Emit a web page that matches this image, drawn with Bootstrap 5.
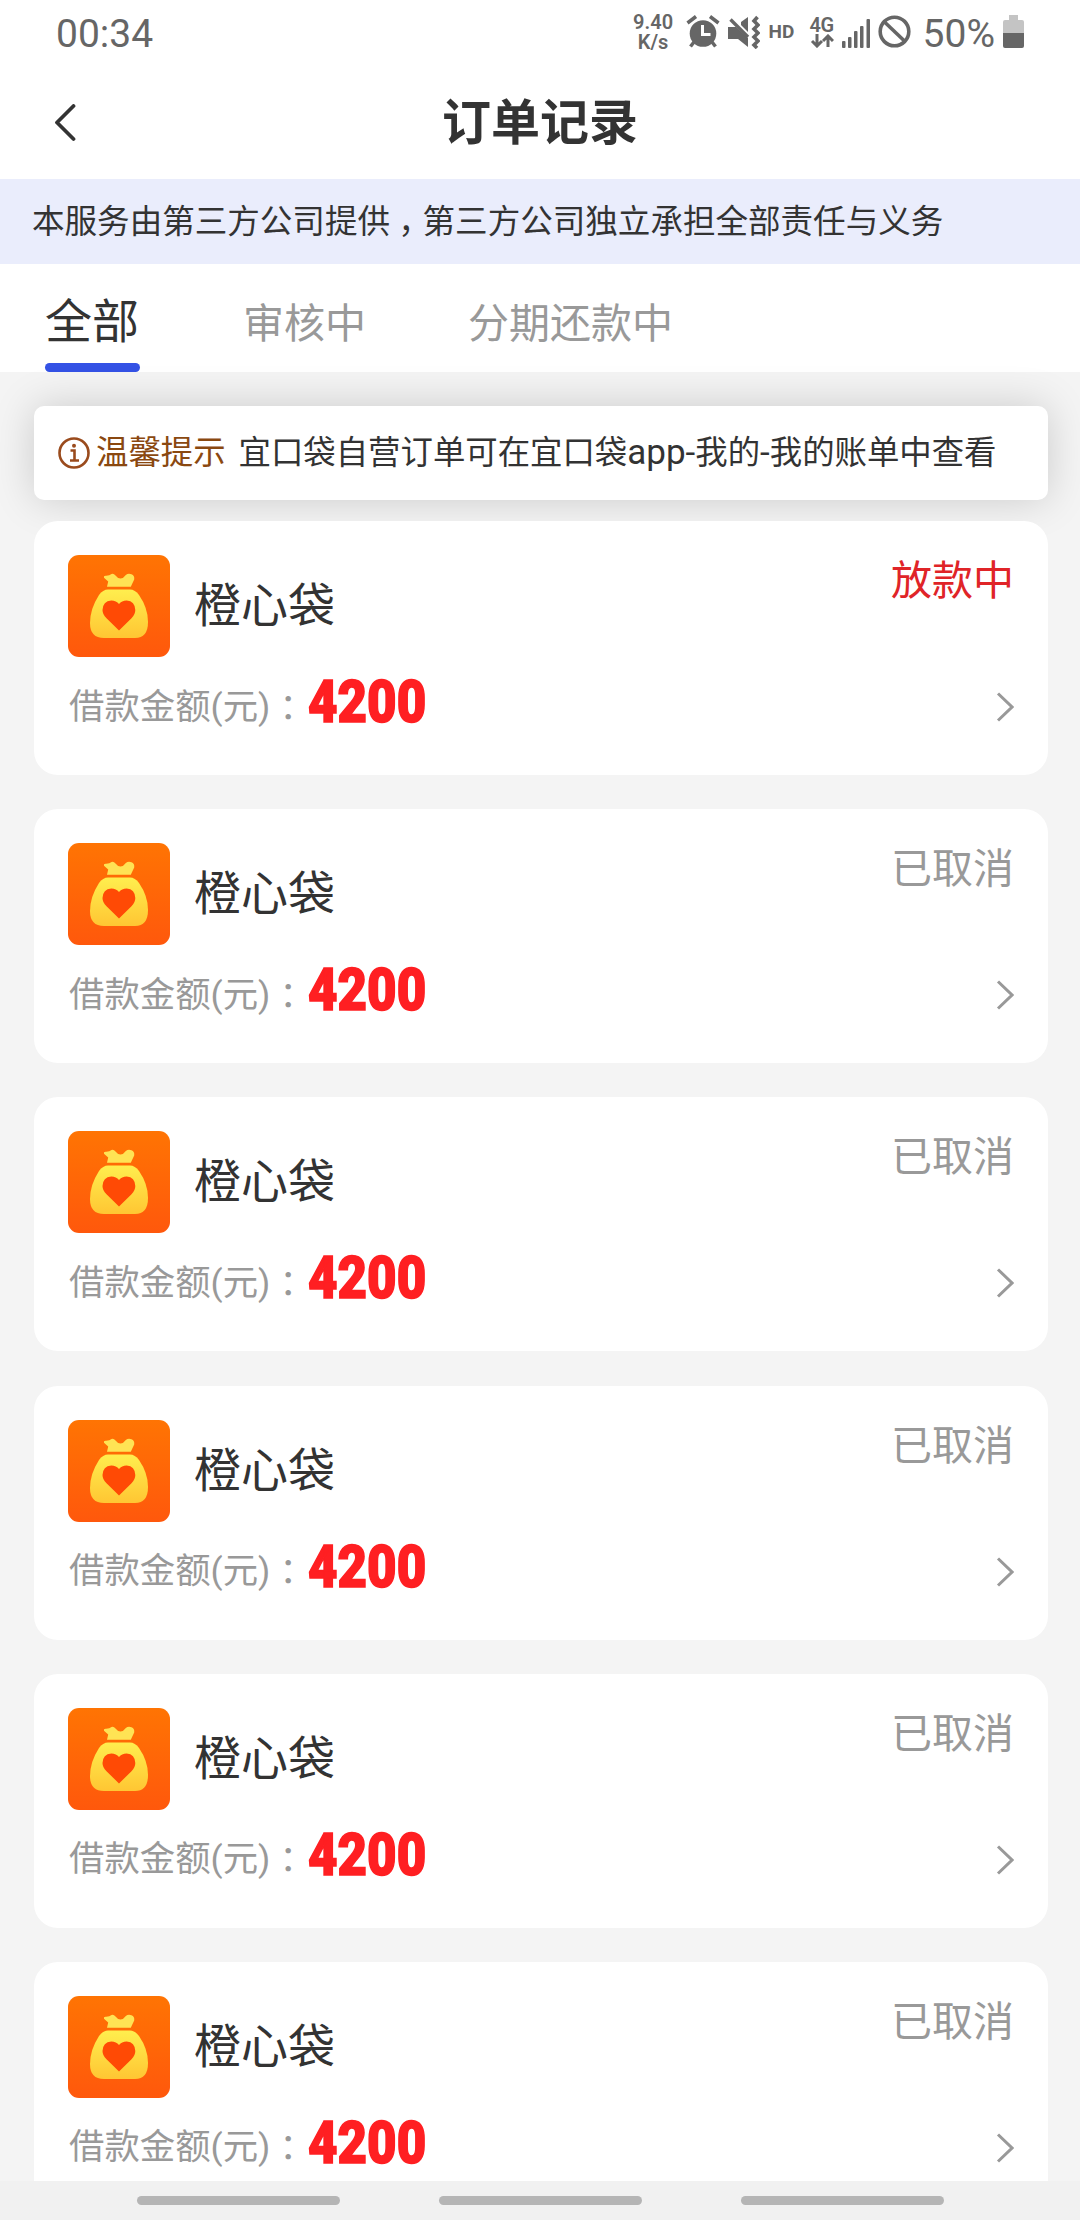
<!DOCTYPE html>
<html lang="zh-CN">
<head>
<meta charset="utf-8">
<meta name="viewport" content="width=device-width, initial-scale=1">
<title>订单记录</title>
<link href="https://cdn.jsdelivr.net/npm/bootstrap@5.3.0/dist/css/bootstrap.min.css" rel="stylesheet">
<style>
body{font-family:Roboto,"Noto Sans CJK SC",sans-serif;color:#333;background:#f4f4f4;line-height:1}
.screen{width:1080px;height:2220px;overflow:hidden}
svg{display:block;flex:none}
.statusbar{height:66px;padding:0 56px 0 56px;color:#666}
.clock{font-size:39px;line-height:66px;padding-top:1px;height:66px}
.net-speed{width:43px;font-size:20px;line-height:20px;font-weight:600;margin-right:11px;margin-top:-2px;white-space:nowrap}
.hd-tag{font-size:19px;font-weight:500;width:41px;height:20px;line-height:18px}
.net-type{font-size:20px;font-weight:600;width:24px;line-height:18px;letter-spacing:-.5px}
.sb-icon{margin-top:-3px}
.titlebar{height:113px;padding:0 54px}
.titlebar h1{font-size:49px;font-weight:700;line-height:115px;height:113px}
.side{width:24px}
.disclaimer{height:85px;background:#eaedfc;font-size:32.55px;line-height:87px;padding-left:32px;white-space:nowrap}
.mid-comma{display:inline-block;width:1em;line-height:1;padding-left:.25em;font-feature-settings:"halt" 1}
.order-tabs{height:108px;padding-left:45px;color:#999;font-size:41px}
.order-tabs .nav-link{padding:0;color:inherit;line-height:50px;height:108px;white-space:nowrap;padding-top:35px}
.order-tabs .nav-link.active{color:#333;font-size:47px;padding-top:33px;width:95px}
.order-tabs .nav-link.active::after{content:"";display:block;height:9px;border-radius:5px;background:#3452e5;margin-top:16px}
.tip{height:94px;flex:none;margin:34px 32px 21px 34px;border-radius:10px;box-shadow:0 0 42px rgba(0,0,0,.17);padding-left:24px;font-size:32.4px;line-height:92px;white-space:nowrap}
.tip-label{color:#8a4810;margin:0 13px 0 6px}
.latin{font-size:35px;line-height:1}
.orders{margin:0 32px 0 34px;gap:34.2px;min-height:0}
.order{height:254px;flex:none;border:0;border-radius:24px;padding:34px 34px 0;color:#333}
.order-name{font-size:47px;line-height:101px;height:102px;margin-left:24px}
.order-state{font-size:41px;line-height:52px;color:#999}
.order-state.paying{color:#e02428}
.order-row{height:100px}
.order-label{font-size:35.4px;color:#999;line-height:50px;height:51px;white-space:nowrap;padding-left:1px}
.colon{font-family:"Noto Sans CJK TC",sans-serif;line-height:1;vertical-align:-2px}
.order-sum{font-size:60px;font-weight:900;color:#ff1f22;width:119px;line-height:60px;height:70px;padding-left:2px}
.order-sum span{display:inline-block;transform:scaleX(.85);transform-origin:0 50%;-webkit-text-stroke:1.6px #ff1f22}
.navkeys{height:39px;background:#f1f1f1;gap:99px;padding-top:0}
.navkeys i{width:203px;height:9px;border-radius:5px;background:#b5b5b5}
</style>
<script src="https://cdn.jsdelivr.net/npm/bootstrap@5.3.0/dist/js/bootstrap.bundle.min.js"></script>
</head>
<body>
<svg width="0" height="0" class="position-absolute" aria-hidden="true">
  <defs>
    <linearGradient id="tile" x1="0" y1="0" x2="0" y2="1"><stop offset="0" stop-color="#ff7403"/><stop offset="1" stop-color="#ff580c"/></linearGradient>
    <linearGradient id="gold" x1="0" y1="0" x2="0" y2="1"><stop offset="0" stop-color="#ffee4e"/><stop offset="1" stop-color="#ffc633"/></linearGradient>
  </defs>
  <symbol id="bag" viewBox="0 0 102 102">
    <rect width="102" height="102" rx="11" fill="url(#tile)"/>
    <path d="M39 31.8 40.2 26.5 36 22.8Q35.3 21 37.5 20.8 41.5 21 43.5 19Q45.5 18 47.5 20.5 49.5 23.4 52.5 23.4 55.5 23.4 57.8 20 60.3 18 63.5 19.3 66.8 20.5 66.2 24.5L62.8 31.8Z" fill="#ffe354"/>
    <path d="M40 34.5H62Q67 34.5 71 40 80 53 80 67 80 83 67 83H36Q22 83 22 68 22 54 31 40 35 34.5 40 34.5Z" fill="url(#gold)"/>
    <path d="M51 75.5 38.5 63.2Q34.5 59.5 34.5 55 34.8 46 43.3 45.4 48.3 45.4 51 49 53.7 45.4 58.7 45.4 67 46 67.3 55 67.3 59.5 63.5 63.2Z" fill="#ff4a05"/>
  </symbol>
  <symbol id="more" viewBox="0 0 20 32"><path d="M4 2.5 18 16 4 29.5" fill="none" stroke="#999" stroke-width="3"/></symbol>
</svg>
<div class="screen d-flex flex-column">
  <header class="bg-white">
    <div class="statusbar d-flex align-items-center">
      <span class="clock me-auto">00:34</span>
      <div class="net-speed text-center">9.40<br>K/s</div>
      <svg class="sb-icon" width="34" height="34" viewBox="0 0 34 34" fill="none" stroke="#666"><circle cx="17" cy="18.5" r="13.3" fill="#666" stroke="none"/><path d="M1.5 8 10 1.5M24 1.5 32.5 8M8 27 4.5 31.5M26 27 29.5 31.5" stroke-width="3.5"/><path d="M16.5 10V19.5H24.5" stroke="#fff" stroke-width="3"/></svg>
      <svg class="ms-2 sb-icon" width="32" height="34" viewBox="0 0 32 34" fill="none" stroke="#666"><path d="M0 12H8L20 23V32L10 24H0Z" fill="#666" stroke="none"/><path d="M13 7 20 2V17L13 10Z" fill="#666" stroke="none"/><path d="M2.5 4.5 20 22" stroke-width="3.4"/><path d="M29.5 2 26 6 30 10 26 14 30 18 26 22 30 26 26 30 29 33" stroke-width="3.6"/></svg>
      <span class="hd-tag fw-bold" style="margin-left:9px">HD</span>
      <div class="text-center sb-icon">
        <div class="net-type">4G</div>
        <svg width="24" height="14" viewBox="0 0 24 14" fill="none" stroke="#666" stroke-width="3"><path d="M7 0V11M2 7 7 12 12 7M18 13V3M13 7 18 2 23 7"/></svg>
      </div>
      <svg style="margin-left:8px" width="28" height="29" viewBox="0 0 28 29" fill="#666"><rect y="22" width="3.5" height="7" rx="1"/><rect x="6" y="18" width="3.5" height="11" rx="1"/><rect x="12" y="12" width="3.5" height="17" rx="1"/><rect x="18" y="7" width="3.5" height="22" rx="1"/><rect x="24.5" width="3.5" height="29" rx="1"/></svg>
      <svg class="sb-icon" style="margin-left:8px" width="33" height="34" viewBox="0 0 33 34" fill="none" stroke="#666" stroke-width="3.6"><circle cx="16.5" cy="16.5" r="14.3"/><path d="M6 6.5 27 26.5"/></svg>
      <span class="clock" style="margin-left:12px">50%</span>
      <svg class="ms-2 sb-icon" width="21" height="34" viewBox="0 0 21 34"><path d="M6 0H15V5H19Q21 5 21 7V18H0V7Q0 5 2 5H6Z" fill="#c4c4c4"/><path d="M0 18H21V31Q21 33 19 33H2Q0 33 0 31Z" fill="#666"/></svg>
    </div>
    <div class="titlebar d-flex align-items-center justify-content-between">
      <svg class="side" width="24" height="38" viewBox="0 0 24 38"><path d="M19.5 2 3 18.5 19.5 35" fill="none" stroke="#333" stroke-width="3.8" stroke-linecap="round" stroke-linejoin="round"/></svg>
      <h1 class="m-0">订单记录</h1>
      <span class="side"></span>
    </div>
  </header>
  <div class="disclaimer">本服务由第三方公司提供<span class="mid-comma">，</span>第三方公司独立承担全部责任与义务</div>
  <nav class="order-tabs nav flex-nowrap bg-white">
    <a class="nav-link active">全部</a>
    <a class="nav-link" style="margin-left:103px">审核中</a>
    <a class="nav-link" style="margin-left:102px">分期还款中</a>
  </nav>
  <div class="tip bg-white d-flex align-items-center">
    <svg width="32" height="32" viewBox="0 0 32 32" fill="none" stroke="#9a4b1d" stroke-width="2.6"><circle cx="16" cy="16" r="14.5"/><path d="M12.5 13.5H16.5V23.5M12 23.5H21"/><circle cx="16" cy="8.8" r="2" fill="#9a4b1d" stroke="none"/></svg>
    <span class="tip-label">温馨提示</span><span>宜口袋自营订单可在宜口袋<span class="latin">app-</span>我的<span class="latin">-</span>我的账单中查看</span>
  </div>
  <main class="orders d-flex flex-column flex-grow-1 overflow-hidden">
    <article class="order card">
      <div class="d-flex align-items-start"><svg width="102" height="102"><use href="#bag"/></svg><span class="order-name">橙心袋</span><span class="order-state paying ms-auto">放款中</span></div>
      <div class="order-row d-flex align-items-center"><span class="order-label">借款金额(元)<span class="colon" lang="zh-Hant">：</span></span><span class="order-sum"><span>4200</span></span><svg class="ms-auto" width="20" height="32"><use href="#more"/></svg></div>
    </article>
    <article class="order card">
      <div class="d-flex align-items-start"><svg width="102" height="102"><use href="#bag"/></svg><span class="order-name">橙心袋</span><span class="order-state ms-auto">已取消</span></div>
      <div class="order-row d-flex align-items-center"><span class="order-label">借款金额(元)<span class="colon" lang="zh-Hant">：</span></span><span class="order-sum"><span>4200</span></span><svg class="ms-auto" width="20" height="32"><use href="#more"/></svg></div>
    </article>
    <article class="order card">
      <div class="d-flex align-items-start"><svg width="102" height="102"><use href="#bag"/></svg><span class="order-name">橙心袋</span><span class="order-state ms-auto">已取消</span></div>
      <div class="order-row d-flex align-items-center"><span class="order-label">借款金额(元)<span class="colon" lang="zh-Hant">：</span></span><span class="order-sum"><span>4200</span></span><svg class="ms-auto" width="20" height="32"><use href="#more"/></svg></div>
    </article>
    <article class="order card">
      <div class="d-flex align-items-start"><svg width="102" height="102"><use href="#bag"/></svg><span class="order-name">橙心袋</span><span class="order-state ms-auto">已取消</span></div>
      <div class="order-row d-flex align-items-center"><span class="order-label">借款金额(元)<span class="colon" lang="zh-Hant">：</span></span><span class="order-sum"><span>4200</span></span><svg class="ms-auto" width="20" height="32"><use href="#more"/></svg></div>
    </article>
    <article class="order card">
      <div class="d-flex align-items-start"><svg width="102" height="102"><use href="#bag"/></svg><span class="order-name">橙心袋</span><span class="order-state ms-auto">已取消</span></div>
      <div class="order-row d-flex align-items-center"><span class="order-label">借款金额(元)<span class="colon" lang="zh-Hant">：</span></span><span class="order-sum"><span>4200</span></span><svg class="ms-auto" width="20" height="32"><use href="#more"/></svg></div>
    </article>
    <article class="order card">
      <div class="d-flex align-items-start"><svg width="102" height="102"><use href="#bag"/></svg><span class="order-name">橙心袋</span><span class="order-state ms-auto">已取消</span></div>
      <div class="order-row d-flex align-items-center"><span class="order-label">借款金额(元)<span class="colon" lang="zh-Hant">：</span></span><span class="order-sum"><span>4200</span></span><svg class="ms-auto" width="20" height="32"><use href="#more"/></svg></div>
    </article>
  </main>
  <footer class="navkeys d-flex align-items-center justify-content-center flex-shrink-0"><i></i><i></i><i></i></footer>
</div>
</body>
</html>
